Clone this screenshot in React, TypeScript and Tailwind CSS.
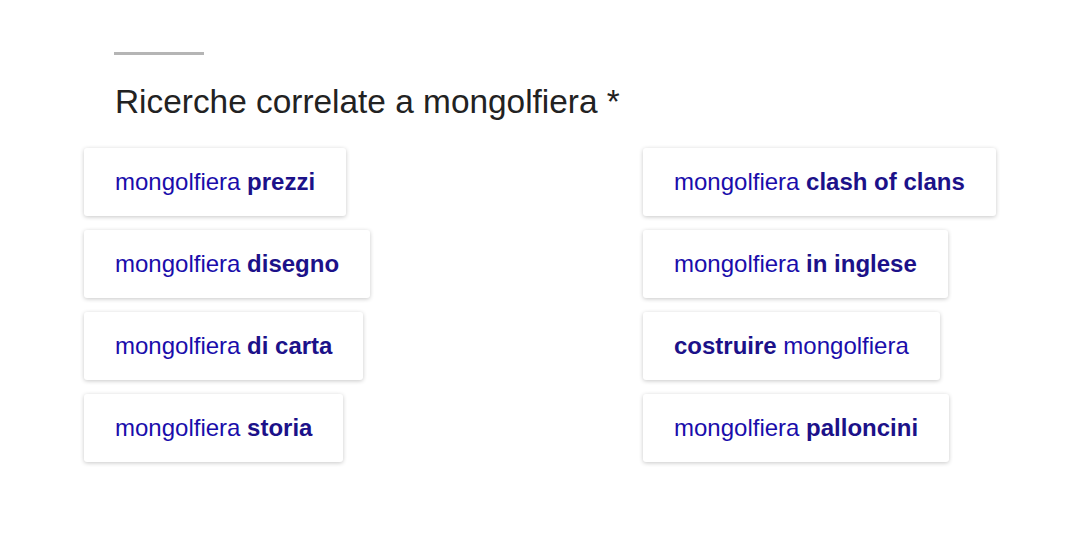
import React from 'react';

type Chip = { pre?: string; bold: string; post?: string };

const left: Chip[] = [
  { pre: 'mongolfiera ', bold: 'prezzi' },
  { pre: 'mongolfiera ', bold: 'disegno' },
  { pre: 'mongolfiera ', bold: 'di carta' },
  { pre: 'mongolfiera ', bold: 'storia' },
];

const right: Chip[] = [
  { pre: 'mongolfiera ', bold: 'clash of clans' },
  { pre: 'mongolfiera ', bold: 'in inglese' },
  { bold: 'costruire', post: ' mongolfiera' },
  { pre: 'mongolfiera ', bold: 'palloncini' },
];

function RelatedChip({ chip }: { chip: Chip }) {
  return (
    <a className="flex h-[68px] items-center rounded-[3px] bg-white pl-[31px] pr-[31px] text-[24px] text-[#1a0dab] shadow-[0_1px_4px_rgba(0,0,0,0.22)] whitespace-pre">
      {chip.pre}
      <b className="font-bold text-[#1c1189]">{chip.bold}</b>
      {chip.post}
    </a>
  );
}

export default function App() {
  return (
    <div
      className="h-[535px] w-[1068px] bg-white pl-[84px] pt-[52px]"
      style={{ fontFamily: '"Liberation Sans", Arial, sans-serif' }}
    >
      {/* divider + heading */}
      <div className="ml-[30px] h-[3px] w-[90px] bg-[#b5b5b5]" />
      <h2 className="ml-[31px] mt-[27px] text-[33.4px] leading-[40px] text-[#222]">
        Ricerche correlate a mongolfiera *
      </h2>

      {/* chips */}
      <div className="mt-[26px] grid grid-cols-[559px_auto] gap-y-[14px]">
        {left.map((c, i) => (
          <React.Fragment key={i}>
            <div className="flex">
              <RelatedChip chip={c} />
            </div>
            <div className="flex">
              <RelatedChip chip={right[i]} />
            </div>
          </React.Fragment>
        ))}
      </div>
    </div>
  );
}
